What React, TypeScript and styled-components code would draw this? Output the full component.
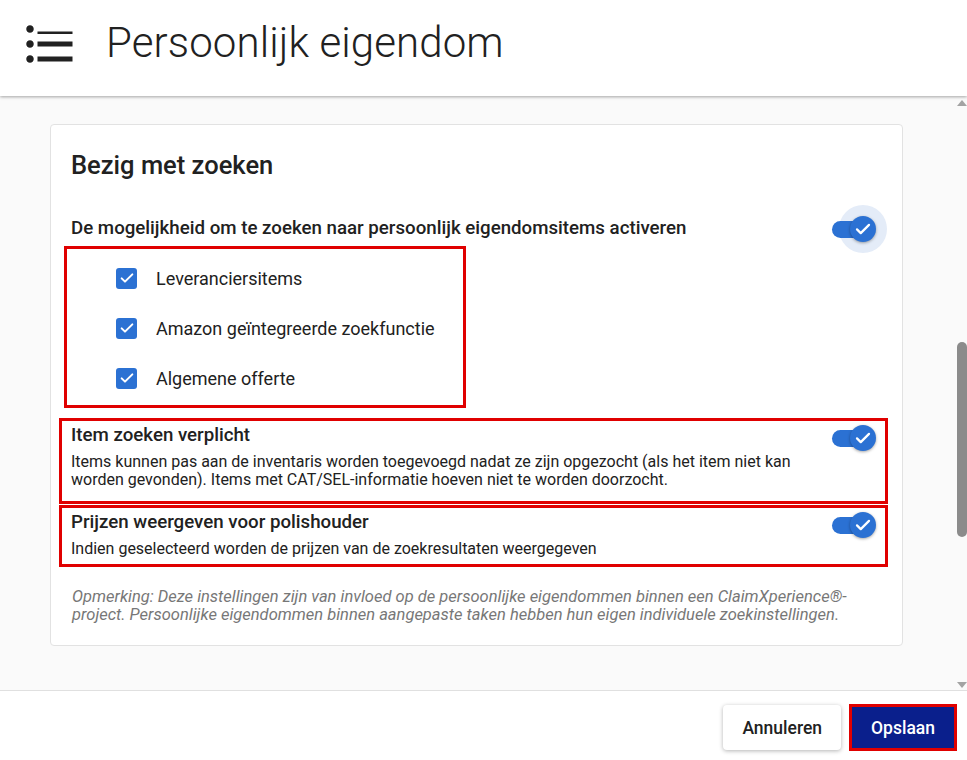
import React from "react";
import styled, { createGlobalStyle } from "styled-components";

const Global = createGlobalStyle`
  html, body { margin: 0; padding: 0; height: 100%; }
  body { font-family: Roboto, "Noto Sans", sans-serif; color: #212121; background: #fff; }
  #root { height: 100%; }
  * { box-sizing: border-box; }
`;

const Page = styled.div`
  width: 967px;
  height: 760px;
  display: flex;
  flex-direction: column;
  overflow: hidden;
`;

const Header = styled.header`
  height: 96px;
  flex: none;
  display: flex;
  align-items: center;
  background: #fff;
  box-shadow: 0 1px 3px rgba(0, 0, 0, 0.35);
  position: relative;
  z-index: 2;
`;

const MenuIcon = styled.svg`
  width: 60px;
  height: 60px;
  margin-left: 20px;
  margin-top: -8px;
  fill: #212121;
`;

const HeaderTitle = styled.h1`
  margin: -11px 0 0 26px;
  font-weight: 300;
  font-size: 42px;
  color: #212121;
  letter-spacing: 0.1px;
`;

const Body = styled.div`
  flex: 1;
  display: flex;
  background: #fafafa;
  min-height: 0;
`;

const Content = styled.main`
  flex: 1;
  padding: 28px 52px 0 50px;
`;

const ScrollTrack = styled.div`
  width: 12px;
  flex: none;
  display: flex;
  flex-direction: column;
  align-items: center;
  background: #fafafa;
  padding: 4px 0 2px 1px;
`;

const Arrow = styled.div<{ $down?: boolean }>`
  width: 0;
  height: 0;
  border-left: 5px solid transparent;
  border-right: 5px solid transparent;
  ${(p) =>
    p.$down
      ? "border-top: 6px solid #a3a3a3;"
      : "border-bottom: 6px solid #a3a3a3;"}
`;

const ThumbArea = styled.div`
  flex: 1;
  width: 100%;
  display: flex;
  flex-direction: column;
  align-items: center;
  padding-top: 236px;
`;

const Thumb = styled.div`
  width: 10px;
  height: 195px;
  background: #8b8b8b;
  border-radius: 5px;
`;

const Card = styled.section`
  background: #fff;
  border: 1px solid #e2e2e2;
  border-radius: 4px;
  padding: 24px 25px 21px 20px;
`;

const CardTitle = styled.h2`
  margin: 0 0 31px 0;
  font-size: 25.5px;
  font-weight: 500;
  line-height: 32px;
  color: #212121;
`;

const MainRow = styled.div`
  display: flex;
  align-items: center;
  justify-content: space-between;
  height: 32px;
`;

const MainLabel = styled.div`
  font-size: 18.7px;
  font-weight: 500;
  color: #212121;
`;

const Highlight = styled.div<{ $ml: number; $mr: number; $mt: number; $w?: number }>`
  border: 3px solid #e00000;
  margin-left: ${(p) => p.$ml}px;
  margin-right: ${(p) => p.$mr}px;
  margin-top: ${(p) => p.$mt}px;
  ${(p) => (p.$w ? `width: ${p.$w}px;` : "")}
`;

const CheckList = styled.div`
  padding: 4px 0 2px 49px;
  display: flex;
  flex-direction: column;
`;

const CheckRow = styled.label`
  display: flex;
  align-items: center;
  height: 50px;
  gap: 19px;
  font-size: 18px;
  color: #212121;
`;

const CheckBox = styled.span`
  width: 21px;
  height: 21px;
  border-radius: 3px;
  background: #2b71d3;
  display: flex;
  align-items: center;
  justify-content: center;
`;

const SettingRow = styled.div<{ $pb: number }>`
  display: flex;
  justify-content: space-between;
  align-items: flex-start;
  padding: 3px 8px ${(p) => p.$pb}px 9px;
`;

const SettingText = styled.div`
  display: flex;
  flex-direction: column;
`;

const SettingTitle = styled.div`
  font-size: 18.7px;
  font-weight: 500;
  line-height: 22px;
  color: #212121;
`;

const SettingDesc = styled.div`
  font-size: 16px;
  line-height: 18px;
  color: #212121;
  margin-top: 7px;
  max-width: 750px;
`;

const Toggle = styled.div<{ $halo?: boolean }>`
  position: relative;
  width: 46px;
  height: 28px;
  flex: none;
  margin-top: ${(p) => (p.$halo ? 2 : 0)}px;
`;

const Track = styled.div`
  position: absolute;
  left: 1px;
  top: 6px;
  width: 38px;
  height: 17px;
  border-radius: 9px;
  background: #2b71d3;
`;

const Halo = styled.div`
  position: absolute;
  left: 8px;
  top: -10px;
  width: 48px;
  height: 48px;
  border-radius: 50%;
  background: #e4ecf8;
`;

const Knob = styled.div`
  position: absolute;
  left: 19px;
  top: 1px;
  width: 26px;
  height: 26px;
  border-radius: 50%;
  background: #2b71d3;
  box-shadow: 0 1px 3px rgba(0, 0, 0, 0.35);
  display: flex;
  align-items: center;
  justify-content: center;
`;

const Note = styled.p`
  margin: 21px 0 0 1px;
  font-size: 16.5px;
  line-height: 18px;
  font-style: italic;
  color: #777;
`;

const Footer = styled.footer`
  height: 70px;
  flex: none;
  background: #fff;
  border-top: 1px solid #e0e0e0;
  display: flex;
  align-items: center;
  justify-content: flex-end;
  gap: 8px;
  padding: 0 10px 0 0;
`;

const Button = styled.button<{ $primary?: boolean }>`
  height: ${(p) => (p.$primary ? 47 : 45)}px;
  padding: 0 19px;
  font-family: Roboto, sans-serif;
  font-size: 17.5px;
  font-weight: 500;
  border-radius: 4px;
  cursor: pointer;
  margin-top: 4px;
  ${(p) =>
    p.$primary
      ? "background: #0a1f8c; color: #fff; border: 3px solid #e00000; border-radius: 0;"
      : "background: #fff; color: #212121; border: none; box-shadow: 0 1px 4px rgba(0,0,0,0.3);"}
`;

const Check = ({ size = 14 }: { size?: number }) => (
  <svg width={size} height={size} viewBox="0 0 24 24">
    <path d="M4 12.5l5 5L20 6.5" fill="none" stroke="#fff" strokeWidth="3" strokeLinecap="round" strokeLinejoin="round" />
  </svg>
);

const Switch = ({ halo }: { halo?: boolean }) => (
  <Toggle $halo={halo}>
    {halo && <Halo />}
    <Track />
    <Knob>
      <Check size={18} />
    </Knob>
  </Toggle>
);

export default function App() {
  return (
    <Page>
      <Global />
      <Header>
        <MenuIcon viewBox="0 0 24 24">
          <path d="M4 10.5c-.83 0-1.5.67-1.5 1.5s.67 1.5 1.5 1.5 1.5-.67 1.5-1.5-.67-1.5-1.5-1.5zm0-6c-.83 0-1.5.67-1.5 1.5S3.17 7.5 4 7.5 5.5 6.83 5.5 6 4.83 4.5 4 4.5zm0 12c-.83 0-1.5.68-1.5 1.5s.68 1.5 1.5 1.5 1.5-.68 1.5-1.5-.67-1.5-1.5-1.5zM7 19h14v-2H7v2zm0-6h14v-2H7v2zm0-7v2h14V7H7z" />
        </MenuIcon>
        <HeaderTitle>Persoonlijk eigendom</HeaderTitle>
      </Header>
      <Body>
        <Content>
          <Card>
            <CardTitle>Bezig met zoeken</CardTitle>
            <MainRow>
              <MainLabel>De mogelijkheid om te zoeken naar persoonlijk eigendomsitems activeren</MainLabel>
              <Switch halo />
            </MainRow>
            <Highlight $ml={-7} $mr={0} $mt={2} $w={402}>
              <CheckList>
                {["Leveranciersitems", "Amazon geïntegreerde zoekfunctie", "Algemene offerte"].map((t) => (
                  <CheckRow key={t}>
                    <CheckBox>
                      <Check size={16} />
                    </CheckBox>
                    {t}
                  </CheckRow>
                ))}
              </CheckList>
            </Highlight>
            <Highlight $ml={-12} $mr={-11} $mt={10}>
              <SettingRow $pb={12}>
                <SettingText>
                  <SettingTitle>Item zoeken verplicht</SettingTitle>
                  <SettingDesc>
                    Items kunnen pas aan de inventaris worden toegevoegd nadat ze zijn opgezocht (als het item niet kan worden gevonden). Items met CAT/SEL-informatie hoeven niet te worden doorzocht.
                  </SettingDesc>
                </SettingText>
                <Switch />
              </SettingRow>
            </Highlight>
            <Highlight $ml={-12} $mr={-11} $mt={1}>
              <SettingRow $pb={6}>
                <SettingText>
                  <SettingTitle>Prijzen weergeven voor polishouder</SettingTitle>
                  <SettingDesc>Indien geselecteerd worden de prijzen van de zoekresultaten weergegeven</SettingDesc>
                </SettingText>
                <Switch />
              </SettingRow>
            </Highlight>
            <Note>
              Opmerking: Deze instellingen zijn van invloed op de persoonlijke eigendommen binnen een ClaimXperience®-project. Persoonlijke eigendommen binnen aangepaste taken hebben hun eigen individuele zoekinstellingen.
            </Note>
          </Card>
        </Content>
        <ScrollTrack>
          <Arrow />
          <ThumbArea>
            <Thumb />
          </ThumbArea>
          <Arrow $down />
        </ScrollTrack>
      </Body>
      <Footer>
        <Button>Annuleren</Button>
        <Button $primary>Opslaan</Button>
      </Footer>
    </Page>
  );
}
